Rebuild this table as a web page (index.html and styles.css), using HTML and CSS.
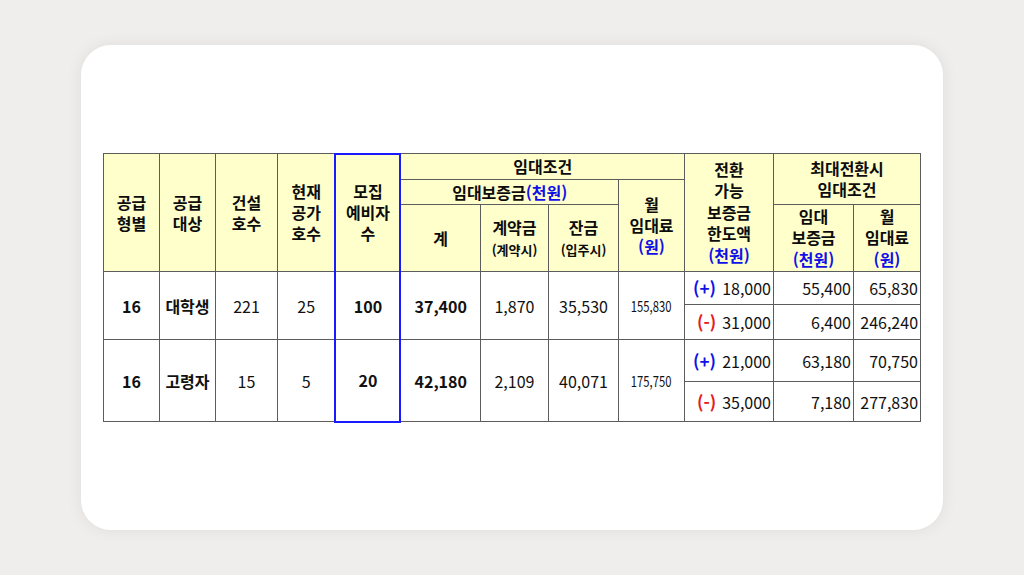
FILE: index.html
```html
<!DOCTYPE html>
<html lang="ko">
<head>
<meta charset="utf-8">
<link rel="stylesheet" href="styles.css">
</head>
<body>
<div class="card">
<table class="rent">
<colgroup>
<col class="c1"><col class="c2"><col class="c3"><col class="c4"><col class="c5"><col class="c6"><col class="c7"><col class="c8"><col class="c9"><col class="c10"><col class="c11"><col class="c12">
</colgroup>
<thead>
<tr class="h1">
<th rowspan="3">공급<br>형별</th>
<th rowspan="3">공급<br>대상</th>
<th rowspan="3">건설<br>호수</th>
<th rowspan="3">현재<br>공가<br>호수</th>
<th rowspan="3" class="hl hl-top">모집<br>예비자<br>수</th>
<th colspan="4">임대조건</th>
<th rowspan="3" class="tall">전환<br>가능<br>보증금<br>한도액<br><span class="blue">(천원)</span></th>
<th colspan="2" rowspan="2" class="tall">최대전환시<br>임대조건</th>
</tr>
<tr class="h2">
<th colspan="3">임대보증금<span class="blue">(천원)</span></th>
<th rowspan="2">월<br>임대료<br><span class="blue">(원)</span></th>
</tr>
<tr class="h3">
<th>계</th>
<th>계약금<br><span class="sub">(계약시)</span></th>
<th>잔금<br><span class="sub">(입주시)</span></th>
<th class="tall">임대<br>보증금<br><span class="blue">(천원)</span></th>
<th class="tall">월<br>임대료<br><span class="blue">(원)</span></th>
</tr>
</thead>
<tbody>
<tr class="r1">
<td rowspan="2" class="b">16</td>
<td rowspan="2" class="b">대학생</td>
<td rowspan="2">221</td>
<td rowspan="2">25</td>
<td rowspan="2" class="b hl">100</td>
<td rowspan="2" class="b">37,400</td>
<td rowspan="2">1,870</td>
<td rowspan="2">35,530</td>
<td rowspan="2"><span class="narrow">155,830</span></td>
<td class="lim"><span class="sign plus">(+)</span><span>18,000</span></td>
<td class="num">55,400</td>
<td class="num">65,830</td>
</tr>
<tr class="r2 split">
<td class="lim"><span class="sign minus">(-)</span><span>31,000</span></td>
<td class="num">6,400</td>
<td class="num">246,240</td>
</tr>
<tr class="r3">
<td rowspan="2" class="b">16</td>
<td rowspan="2" class="b">고령자</td>
<td rowspan="2">15</td>
<td rowspan="2">5</td>
<td rowspan="2" class="b hl hl-bottom">20</td>
<td rowspan="2" class="b">42,180</td>
<td rowspan="2">2,109</td>
<td rowspan="2">40,071</td>
<td rowspan="2"><span class="narrow">175,750</span></td>
<td class="lim"><span class="sign plus">(+)</span><span>21,000</span></td>
<td class="num">63,180</td>
<td class="num">70,750</td>
</tr>
<tr class="r4 split">
<td class="lim"><span class="sign minus">(-)</span><span>35,000</span></td>
<td class="num">7,180</td>
<td class="num">277,830</td>
</tr>
</tbody>
</table>
</div>
</body>
</html>
```

FILE: styles.css
```css
html, body {
  margin: 0;
  padding: 0;
}
body {
  width: 1024px;
  height: 575px;
  background: #efeeed;
  display: flex;
  align-items: center;
  justify-content: center;
  font-family: "Noto Sans CJK KR", "Noto Sans", sans-serif;
  color: #111;
}
.card {
  width: 862px;
  height: 485px;
  background: #ffffff;
  border-radius: 30px;
  box-shadow: 0 0 16px rgba(0, 0, 0, 0.07);
  display: flex;
  align-items: center;
  justify-content: center;
}
.rent {
  border-collapse: collapse;
  table-layout: fixed;
  width: 817px;
}
.c1 { width: 56px; }
.c2 { width: 56px; }
.c3 { width: 62px; }
.c4 { width: 58px; }
.c5 { width: 65px; }
.c6 { width: 80px; }
.c7 { width: 68px; }
.c8 { width: 70px; }
.c9 { width: 66px; }
.c10 { width: 89px; }
.c11 { width: 80px; }
.c12 { width: 67px; }

.rent th, .rent td {
  border: 1px solid #5c5c5c;
  padding: 0;
  text-align: center;
  vertical-align: middle;
}
.rent th {
  background: #ffffcc;
  font-weight: bold;
  font-size: 16px;
  line-height: 21px;
  color: #0c0c0c;
}
.rent th.tall {
  line-height: 21.5px;
}
.h1 { height: 26px; }
.h2 { height: 25px; }
.h3 { height: 67px; }
.blue { color: #1010e8; }
.sub {
  font-size: 13px;
  line-height: 17px;
}
.rent td {
  font-size: 16px;
  line-height: 20px;
}
.rent td.b { font-weight: bold; }
.narrow {
  display: inline-block;
  font-size: 15px;
  transform: scaleX(0.75);
}
.r1 { height: 33px; }
.r2 { height: 35px; }
.r3 { height: 42px; }
.r4 { height: 40px; }
.split td { border-top: 1px solid #b8b8b8; }
.rent td.lim {
  text-align: right;
  padding: 0 2px 0 8px;
}
.lim .sign {
  float: left;
  font-weight: bold;
  font-size: 17px;
}
.lim .plus { color: #1010e8; }
.lim .minus { color: #e81818; padding-left: 4px; }
.rent td.num {
  text-align: right;
  padding-right: 2px;
}
.rent .hl {
  border-left: 2px solid #1a1aff;
  border-right: 2px solid #1a1aff;
}
.rent .hl-top { border-top: 2px solid #1a1aff; }
.rent .hl-bottom { border-bottom: 2px solid #1a1aff; }
```
